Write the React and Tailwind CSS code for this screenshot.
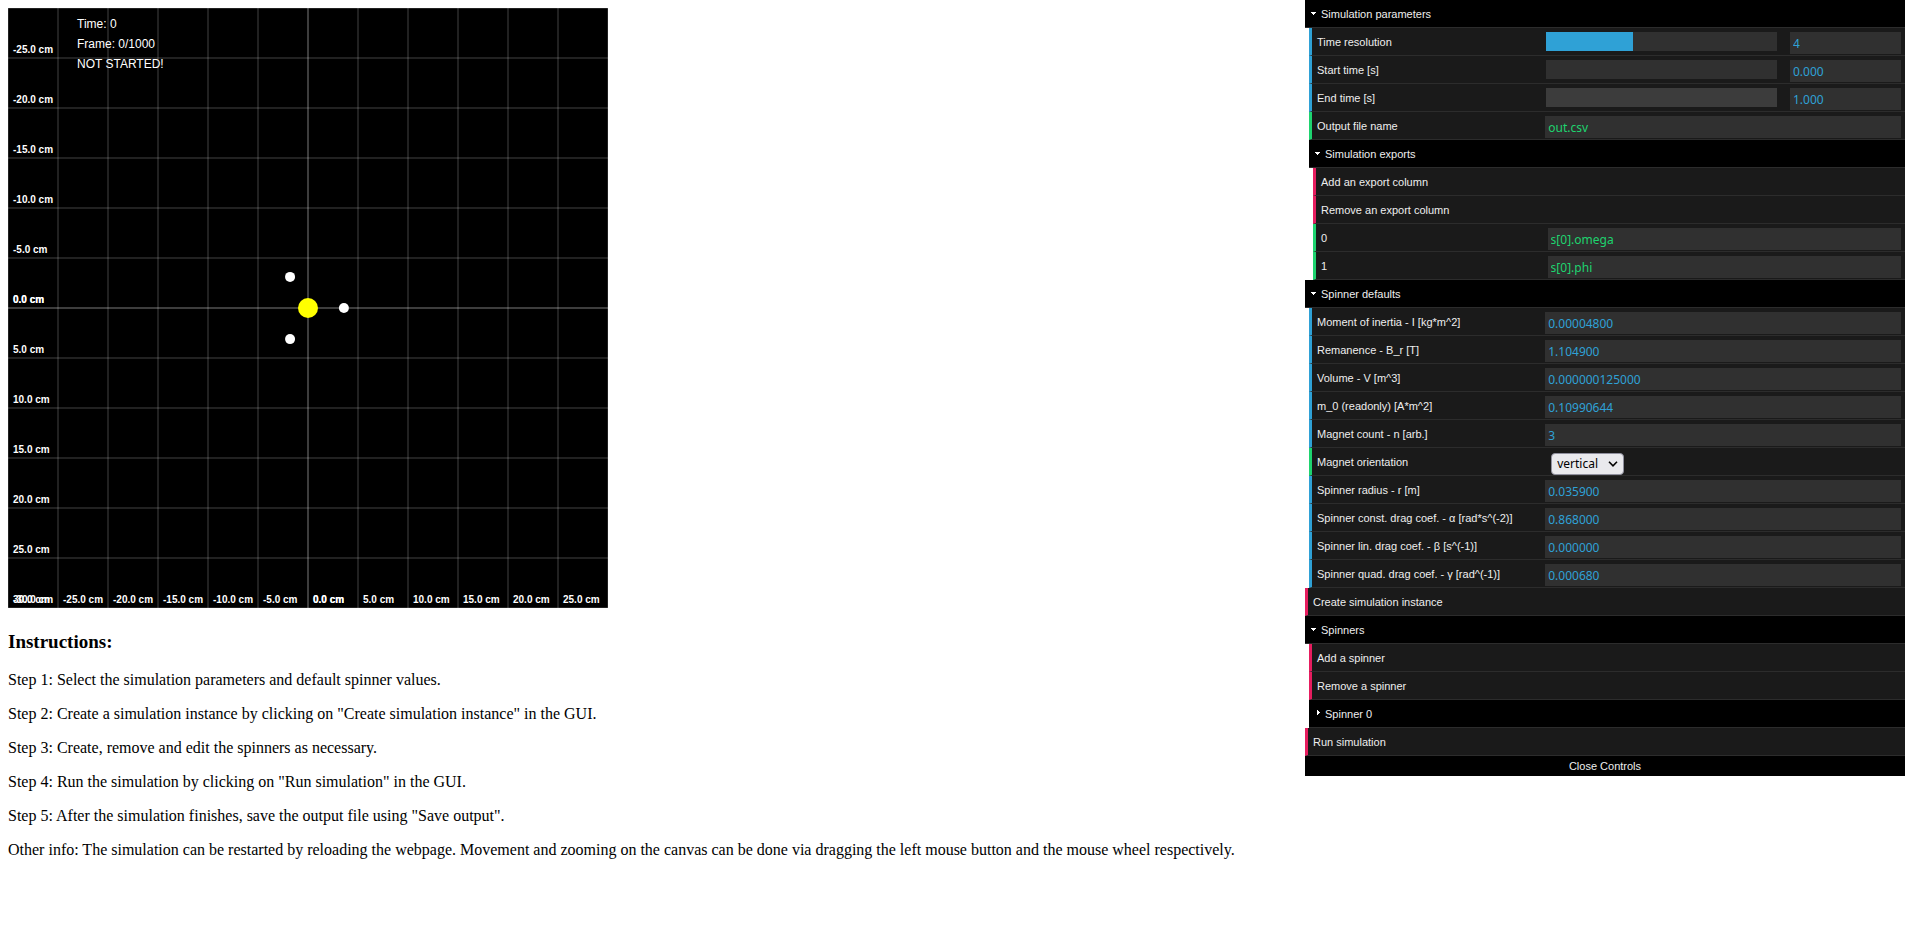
import { useId, useState } from "react";

const TICKS = [-25, -20, -15, -10, -5, 0, 5, 10, 15, 20, 25];
const SIZE = 600;
const PX_PER_CM = 10;
const toPx = (cm) => SIZE / 2 + cm * PX_PER_CM;
const cm = (value) => `${value.toFixed(1)} cm`;

const MAGNETS = [0, 120, 240].map((deg) => ({
  x: SIZE / 2 + 35.9 * Math.cos((deg * Math.PI) / 180),
  y: SIZE / 2 + 35.9 * Math.sin((deg * Math.PI) / 180),
}));

// Edge lines and the two main axes are part of the same grid; the axes are painted twice.
const GRID = [-30, ...TICKS, 30, 0];

function SimulationCanvas() {
  return (
    <svg
      viewBox="0 0 600 600"
      role="img"
      aria-label="Spinner simulation"
      className="block w-full max-w-[600px] bg-black font-['Liberation_Sans',Arial,sans-serif]"
    >
      <g className="fill-white text-[12px]">
        <text x="69" y="20">Time: 0</text>
        <text x="69" y="40">Frame: 0/1000</text>
        <text x="69" y="60">NOT STARTED!</text>
      </g>
      <g stroke="#fff" strokeOpacity="0.13" strokeWidth="2">
        {GRID.map((t, i) => (
          <g key={i}>
            <line x1={toPx(t)} x2={toPx(t)} y1="0" y2={SIZE} />
            <line x1="0" x2={SIZE} y1={toPx(t)} y2={toPx(t)} />
          </g>
        ))}
      </g>
      <g className="fill-white text-[10px] font-bold">
        {[...TICKS, 30, 0].map((t, i) => (
          <text key={i} x="5" y={toPx(t) - 5}>{cm(t)}</text>
        ))}
        {[-30, ...TICKS, 0].map((t, i) => (
          <text key={i} x={toPx(t) + 5} y="595">{cm(t)}</text>
        ))}
      </g>
      <circle cx="300" cy="300" r="10" fill="#ff0" />
      {MAGNETS.map((m, i) => (
        <circle key={i} cx={m.x} cy={m.y} r="5" fill="#fff" />
      ))}
    </svg>
  );
}

const ACCENT = {
  number: "border-l-[#2fa1d6]",
  string: "border-l-[#1ed36f]",
};
const INK = { number: "text-[#2fa1d6]", string: "text-[#1ed36f]" };

function Row({ kind, label, htmlFor, children }) {
  return (
    <li className={`flex h-7 border-b border-l-[3px] border-b-[#2c2c2c] bg-[#1a1a1a] ${ACCENT[kind]}`}>
      <label htmlFor={htmlFor} className="flex-1 truncate pt-px pl-[5px] leading-[26px]">
        {label}
      </label>
      <div className="mr-1 flex w-3/5 items-start pt-1">{children}</div>
    </li>
  );
}

function Box({ id, kind, value, label, className }) {
  return (
    <input
      id={id}
      type="text"
      defaultValue={value}
      aria-label={label}
      className={`h-[22px] min-w-0 bg-[#303030] px-[3px] pt-px font-['Noto_Sans',Tahoma,sans-serif] text-[12px] leading-[21px] outline-none ${INK[kind]} ${className}`}
    />
  );
}

function Field({ kind = "number", label, value }) {
  const id = useId();
  return (
    <Row kind={kind} label={label} htmlFor={id}>
      <Box id={id} kind={kind} value={value} className="w-full" />
    </Row>
  );
}

function SliderField({ label, value, min, max, at, track = "#303030" }) {
  const id = useId();
  const [pos, setPos] = useState(at);
  const pct = ((pos - min) / (max - min)) * 100;
  return (
    <Row kind="number" label={label} htmlFor={id}>
      <div className="flex w-full items-start justify-between pl-px">
        <input
          id={id}
          type="range"
          min={min}
          max={max}
          value={pos}
          onChange={(e) => setPos(Number(e.target.value))}
          style={{ background: `linear-gradient(to right, #2fa1d6 ${pct}%, ${track} ${pct}%)` }}
          className="h-[19px] w-[65%] cursor-ew-resize appearance-none [&::-webkit-slider-thumb]:w-0 [&::-webkit-slider-thumb]:appearance-none"
        />
        <Box kind="number" value={value} label={`${label} value`} className="w-[111px]" />
      </div>
    </Row>
  );
}

function SelectField({ label, options }) {
  const id = useId();
  return (
    <Row kind="string" label={label} htmlFor={id}>
      <div className="relative mt-px ml-[6px]">
        <select
          id={id}
          className="block h-[22px] w-[73px] appearance-none rounded border border-[#8f8f9d] bg-[#e9e9ed] pl-[5px] font-['Noto_Sans',Tahoma,sans-serif] text-[12px] leading-5 text-black"
        >
          {options.map((o) => (
            <option key={o}>{o}</option>
          ))}
        </select>
        <svg viewBox="0 0 10 6" className="pointer-events-none absolute top-2 right-[6px] h-[6px] w-[10px]" fill="none" stroke="#000" strokeWidth="1.6">
          <path d="M1 0.8 L5 4.8 L9 0.8" />
        </svg>
      </div>
    </Row>
  );
}

function Action({ label }) {
  return (
    <li className="h-7 border-b border-l-[3px] border-b-[#2c2c2c] border-l-[#e61d5f] bg-[#1a1a1a]">
      <button type="button" className="block w-full cursor-pointer pt-px pl-[5px] text-left leading-[26px]">
        {label}
      </button>
    </li>
  );
}

function Folder({ title, startOpen = true, children }) {
  const [open, setOpen] = useState(startOpen);
  return (
    <li>
      <button
        type="button"
        aria-expanded={open}
        onClick={() => setOpen(!open)}
        className="flex h-7 w-full cursor-pointer border-b border-[#2c2c2c] bg-black pl-[6px] text-left leading-[26px]"
      >
        <svg viewBox="0 0 10 27" className="h-[27px] w-[10px] shrink-0" fill="#fff" shapeRendering="crispEdges">
          {open ? <path d="M0 12h5v1h-1v1h-1v1h-1v-1h-1v-1h-1z" /> : <path d="M2 10h1v1h1v1h1v1h-1v1h-1v1h-1z" />}
        </svg>
        <span className="pt-px">{title}</span>
      </button>
      {open && children && <ul className="ml-1">{children}</ul>}
    </li>
  );
}

function Controls() {
  return (
    <aside className="mr-[15px] w-[600px] shrink-0 font-['Liberation_Sans',Arial,sans-serif] text-[11px] text-[#eee]">
      <ul>
        <Folder title="Simulation parameters">
          <SliderField label="Time resolution" value="4" min={1} max={9} at={4} />
          <SliderField label="Start time [s]" value="0.000" min={0} max={10} at={0} />
          <SliderField label="End time [s]" value="1.000" min={1} max={10} at={1} track="#3c3c3c" />
          <Field kind="string" label="Output file name" value="out.csv" />
          <Folder title="Simulation exports">
            <Action label="Add an export column" />
            <Action label="Remove an export column" />
            <Field kind="string" label="0" value="s[0].omega" />
            <Field kind="string" label="1" value="s[0].phi" />
          </Folder>
        </Folder>
        <Folder title="Spinner defaults">
          <Field label="Moment of inertia - I [kg*m^2]" value="0.00004800" />
          <Field label="Remanence - B_r [T]" value="1.104900" />
          <Field label="Volume - V [m^3]" value="0.000000125000" />
          <Field label="m_0 (readonly) [A*m^2]" value="0.10990644" />
          <Field label="Magnet count - n [arb.]" value="3" />
          <SelectField label="Magnet orientation" options={["vertical", "horizontal"]} />
          <Field label="Spinner radius - r [m]" value="0.035900" />
          <Field label="Spinner const. drag coef. - α [rad*s^(-2)]" value="0.868000" />
          <Field label="Spinner lin. drag coef. - β [s^(-1)]" value="0.000000" />
          <Field label="Spinner quad. drag coef. - γ [rad^(-1)]" value="0.000680" />
        </Folder>
        <Action label="Create simulation instance" />
        <Folder title="Spinners">
          <Action label="Add a spinner" />
          <Action label="Remove a spinner" />
          <Folder title="Spinner 0" startOpen={false} />
        </Folder>
        <Action label="Run simulation" />
      </ul>
      <button type="button" className="block h-5 w-full cursor-pointer bg-black text-center leading-5">
        Close Controls
      </button>
    </aside>
  );
}

export default function App() {
  return (
    <div className="flex min-h-screen items-start bg-white">
      <main className="min-w-0 flex-1 p-2 font-['Liberation_Serif','Times_New_Roman',serif] text-[16px] leading-[18px] text-black">
        <SimulationCanvas />
        <h3 className="mt-[23px] mb-[19px] text-[19px] leading-[21px] font-bold">Instructions:</h3>
        <div className="flex flex-col gap-4">
          <p>Step 1: Select the simulation parameters and default spinner values.</p>
          <p>Step 2: Create a simulation instance by clicking on "Create simulation instance" in the GUI.</p>
          <p>Step 3: Create, remove and edit the spinners as necessary.</p>
          <p>Step 4: Run the simulation by clicking on "Run simulation" in the GUI.</p>
          <p>Step 5: After the simulation finishes, save the output file using "Save output".</p>
          <p>
            Other info: The simulation can be restarted by reloading the webpage. Movement and zooming on the canvas can
            be done via dragging the left mouse button and the mouse wheel respectively.
          </p>
        </div>
      </main>
      <Controls />
    </div>
  );
}
